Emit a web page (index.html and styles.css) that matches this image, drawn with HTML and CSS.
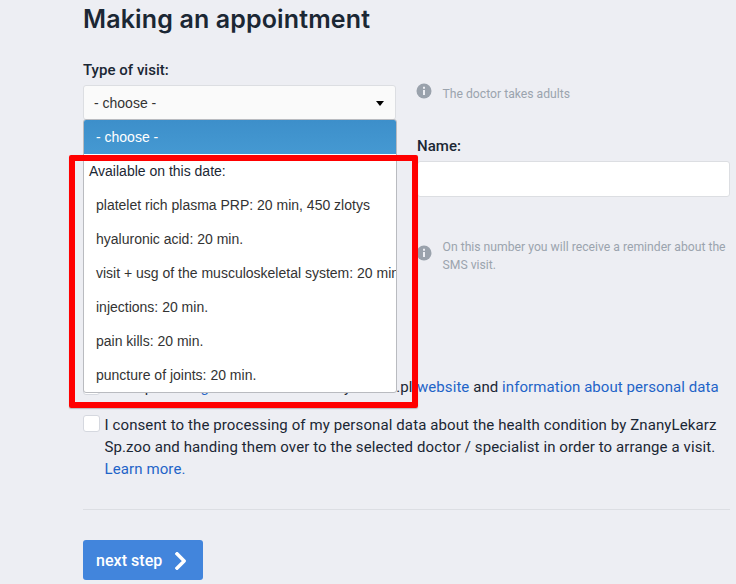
FILE: index.html
```html
<!DOCTYPE html>
<html lang="en">
<head>
<meta charset="utf-8">
<title>Making an appointment</title>
<link rel="stylesheet" href="styles.css">
</head>
<body>
<main class="page">
  <h1><span>Making an appointment</span></h1>
  <form class="form">
    <div class="row row-type">
      <div class="field">
        <div class="label"><span>Type of visit:</span></div>
        <div class="select"><span>- choose -</span><i class="caret"></i>
          <div class="menu">
            <div class="option selected">- choose -</div>
            <div class="group">Available on this date:</div>
            <div class="option">platelet rich plasma PRP: 20 min, 450 zlotys</div>
            <div class="option">hyaluronic acid: 20 min.</div>
            <div class="option">visit + usg of the musculoskeletal system: 20 min.</div>
            <div class="option">injections: 20 min.</div>
            <div class="option">pain kills: 20 min.</div>
            <div class="option">puncture of joints: 20 min.</div>
          </div>
        </div>
      </div>
      <div class="hint hint-adults">
        <svg class="info" viewBox="0 0 16 16"><circle cx="8" cy="8" r="7.5" fill="#9aa2ac"/><path d="M7 3.7h2v2H7zM7 6.9h2v5H7z" fill="#edeef3"/></svg>
        <p>The doctor takes adults</p>
      </div>
    </div>
    <div class="row row-name">
      <div class="field name">
        <div class="label">Name:</div>
        <div class="input"></div>
      </div>
    </div>
    <div class="row row-phone">
      <div class="hint hint-sms">
        <svg class="info" viewBox="0 0 16 16"><circle cx="8" cy="8" r="7.5" fill="#9aa2ac"/><path d="M7 3.7h2v2H7zM7 6.9h2v5H7z" fill="#edeef3"/></svg>
        <p>On this number you will receive a reminder about the SMS visit.</p>
      </div>
    </div>
    <div class="consent terms">
      <span class="box"></span>
      <p><span class="accept">I accept the <a>regulations</a> of the ZnanyLekarz.pl</span><span class="rest"><a>website</a> and <a>information about personal data</a></span></p>
    </div>
    <div class="consent health">
      <span class="box"></span>
      <p>I consent to the processing of my personal data about the health condition by ZnanyLekarz<br>Sp.zoo and handing them over to the selected doctor / specialist in order to arrange a visit.<br><a>Learn more.</a></p>
    </div>
    <hr>
    <button type="button" class="next"><span>next step</span><svg viewBox="0 0 12 18"><path d="M2 1.8 9.2 9 2 16.2" fill="none" stroke="#fff" stroke-width="3.4" stroke-linecap="square" stroke-linejoin="round"/></svg></button>
  </form>
  <div class="highlight"></div>
</main>
</body>
</html>
```
FILE: styles.css
```css
* { box-sizing: border-box; }
body { margin: 0; background: #edeef3; color: #1b2734; font-family: Roboto, "Liberation Sans", sans-serif; }
.page { position: relative; width: 736px; height: 584px; overflow: hidden; padding: 0 6px 0 83px; }
h1 { margin: 0; height: 60px; padding-top: 4px; font: 600 25px/30px Inter, sans-serif; letter-spacing: 0.14px; white-space: nowrap; color: #1b2734; }
p { margin: 0; }
a { color: #1f64c8; }
.row { display: grid; grid-template-columns: 313px 313px; column-gap: 21px; }
.row-type { height: 76px; }
.row-name { height: 76px; }
.row-phone { height: 164px; }
.label { height: 25px; font-size: 15px; line-height: 20px; font-weight: 500; letter-spacing: 0.03px; }
.select { position: relative; display: flex; align-items: center; justify-content: space-between; height: 35px; padding: 1px 11px 0 10px; border: 1px solid #dcdee2; border-radius: 3px; background: #fafafa; color: #333; font: 14px/20px "Liberation Sans", sans-serif; }
.caret { width: 0; height: 0; border: 4.5px solid transparent; border-top: 5px solid #000; border-bottom: 0; }
.menu { position: absolute; z-index: 2; left: -1px; top: 33px; width: 314px; height: 274px; overflow: hidden; border: 1px solid #b9bbc0; border-radius: 3px; background: #fff; white-space: nowrap; }
.option, .group { height: 34px; padding-left: 12px; line-height: 35px; font-size: 14px; }
.group { padding-left: 5px; color: #1b2734; }
.selected { background: linear-gradient(#3d8fca, #4599d2); color: #fff; }
.hint { display: flex; align-items: flex-start; color: #9ba4ae; font-size: 12.2px; line-height: 18px; }
.hint p { margin-left: 10.5px; }
.info { flex: none; width: 16px; height: 16px; margin-left: -1px; }
.hint-adults { padding-top: 23px; }
.hint-adults p { padding-top: 2px; }
.name, .hint-sms { grid-column: 2; }
.input { height: 36px; border: 1px solid #dcdee2; border-radius: 3px; background: #fff; }
.hint-sms { padding-top: 26px; }
.hint-sms .info { margin-top: 7px; }
.consent { display: flex; font-size: 15px; line-height: 22px; letter-spacing: 0.105px; white-space: nowrap; }
.box { flex: none; width: 17px; height: 17px; margin: 2px 4.5px 0 0; border: 1px solid #d5d8df; border-radius: 3px; background: #fff; }
.terms { height: 37px; }
.terms p { display: flex; }
.accept { width: 312.5px; }
.rest { letter-spacing: 0.07px; }
.health { height: 96px; }
.health p { padding-top: 1px; }
hr { height: 1px; margin: 0; border: 0; background: #dcdee3; }
.next { display: flex; align-items: center; gap: 13px; width: 120px; height: 40px; margin-top: 30px; padding: 1px 0 0 13px; border: 0; border-radius: 3px; background: #4285dc; color: #fff; font: 500 16px/20px Roboto, sans-serif; letter-spacing: 0.05px; }
.next svg { width: 12px; height: 18px; }
.highlight { position: absolute; z-index: 3; left: 69px; top: 155px; width: 349px; height: 253px; border: 6px solid #f00; border-radius: 2px; box-shadow: 0 1px 1px #8888; }
```
